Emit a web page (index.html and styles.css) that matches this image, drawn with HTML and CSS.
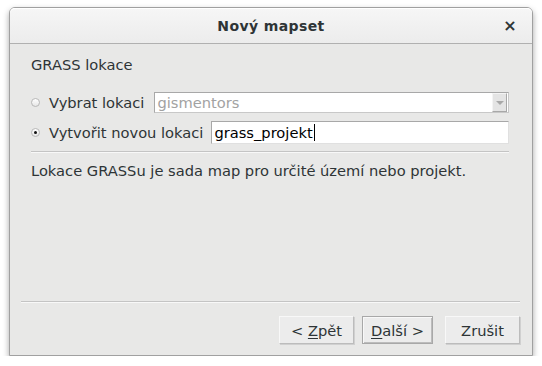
FILE: index.html
```html
<!DOCTYPE html>
<html lang="cs">
<head>
<meta charset="utf-8">
<title>Nový mapset</title>
<link rel="stylesheet" href="styles.css">
</head>
<body>
<div class="window">
  <div class="titlebar">
    <span></span>
    <span class="title">Nový mapset</span>
    <span class="close">×</span>
  </div>
  <div class="content">
    <div class="heading">GRASS lokace</div>
    <div class="rows">
      <div class="row">
        <span class="radio"></span>
        <span class="label">Vybrat lokaci</span>
        <div class="combo">
          <span class="combo-text">gismentors</span>
          <span class="combo-btn"><span class="tri"></span></span>
        </div>
      </div>
      <div class="row">
        <span class="radio checked"></span>
        <span class="label">Vytvořit novou lokaci</span>
        <div class="field"><span>grass_projekt</span><span class="caret"></span></div>
      </div>
    </div>
    <div class="sep"></div>
    <div class="desc">Lokace GRASSu je sada map pro určité území nebo projekt.</div>
  </div>
  <div class="footer">
    <div class="sep"></div>
    <div class="buttons">
      <button class="btn">&lt; <u>Z</u>pět</button>
      <button class="btn default"><u>D</u>alší &gt;</button>
      <button class="btn cancel">Zrušit</button>
    </div>
  </div>
</div>
</body>
</html>
```
FILE: styles.css
```css
html, body {
  margin: 0;
  padding: 0;
  background: #ffffff;
}
body {
  font-family: "DejaVu Sans", sans-serif;
  font-size: 14.67px;
  color: #2e3436;
}
.window {
  margin: 7px 0 0 9px;
  width: 524px;
  height: 349px;
  box-sizing: border-box;
  border: 1px solid #a0a0a0;
  border-radius: 6px 6px 0 0;
  background: #e8e8e7;
  box-shadow: 0 3px 6px rgba(0,0,0,0.35);
  display: flex;
  flex-direction: column;
}
.titlebar {
  height: 35px;
  border-bottom: 1px solid #b0b0b0;
  border-radius: 5px 5px 0 0;
  background: linear-gradient(#f6f6f6, #ececec);
  display: grid;
  grid-template-columns: 40px 1fr 40px;
  align-items: center;
  box-shadow: inset 0 1px 0 #ffffff;
}
.title {
  text-align: center;
  font-weight: bold;
  font-size: 14px;
  letter-spacing: 0.4px;
  color: #2e3436;
}
.close {
  text-align: center;
  font-weight: bold;
  font-size: 16px;
  color: #2e3436;
  padding-right: 4px;
}
.content {
  flex: 1;
  padding: 12px 23px 0 21px;
  color: #2e3436;
}
.heading {
  line-height: 17px;
}
.rows {
  margin-top: 19px;
  display: flex;
  flex-direction: column;
  gap: 8px;
}
.row {
  display: flex;
  align-items: center;
  gap: 8px;
}
.radio {
  width: 9px;
  height: 9px;
  box-sizing: border-box;
  border: 1px solid #b8b8b8;
  border-radius: 50%;
  background: linear-gradient(#ffffff, #e6e6e6);
  margin-right: 1px;
  display: flex;
  align-items: center;
  justify-content: center;
}
.radio.checked::after {
  content: "";
  width: 3px;
  height: 3px;
  border-radius: 50%;
  background: #111;
}
.label {
  white-space: nowrap;
}
.combo {
  flex: 1;
  height: 21px;
  margin-left: 2px;
  box-sizing: border-box;
  background: #ffffff;
  border: 1px solid #c8c8c8;
  border-top-color: #a8a8a8;
  border-left-color: #a8a8a8;
  display: flex;
  align-items: center;
}
.combo-text {
  flex: 1;
  padding-left: 2px;
  color: #a2a2a2;
}
.combo-btn {
  width: 15px;
  height: 19px;
  box-sizing: border-box;
  background: #e4e4e4;
  border: 1px solid #a8a8a8;
  border-top-color: #f4f4f4;
  border-left-color: #f4f4f4;
  margin-right: 1px;
  display: flex;
  align-items: center;
  justify-content: center;
}
.tri {
  width: 0;
  height: 0;
  border-left: 4px solid transparent;
  border-right: 4px solid transparent;
  border-top: 4px solid #a8a8a8;
}
.field {
  flex: 1;
  height: 23px;
  box-sizing: border-box;
  background: #ffffff;
  border: 1px solid #e0e0e0;
  border-top-color: #a8a8a8;
  border-left-color: #a8a8a8;
  display: flex;
  align-items: center;
  padding-left: 2px;
  color: #000;
}
.caret {
  width: 1px;
  height: 17px;
  background: #000;
  margin-left: 1px;
}
.sep {
  height: 1px;
  background: #c4c4c4;
  border-bottom: 1px solid #f8f8f8;
}
.content .sep {
  margin-top: 7px;
}
.desc {
  margin-top: 9px;
  line-height: 17px;
}
.footer {
  padding: 0 12px 11px 11px;
}
.buttons {
  margin-top: 13px;
  display: flex;
  justify-content: flex-end;
  gap: 8px;
}
.btn {
  font-family: "DejaVu Sans", sans-serif;
  font-size: 14.67px;
  color: #2e3436;
  width: 75px;
  height: 28px;
  box-sizing: border-box;
  background: #ececec;
  border: 1px solid #bcbcbc;
  border-top-color: #f8f8f8;
  border-left-color: #f8f8f8;
  box-shadow: 1px 1px 0 #d0d0d0;
  padding: 0;
}
.btn u {
  text-decoration-thickness: 1px;
  text-underline-offset: 2px;
}
.btn.default {
  width: 71px;
  border: 1px solid #a8a8a8;
  box-shadow: inset 1px 1px 0 #f8f8f8, inset -1px -1px 0 #bcbcbc;
}
.btn.cancel {
  margin-left: 4px;
}
```
